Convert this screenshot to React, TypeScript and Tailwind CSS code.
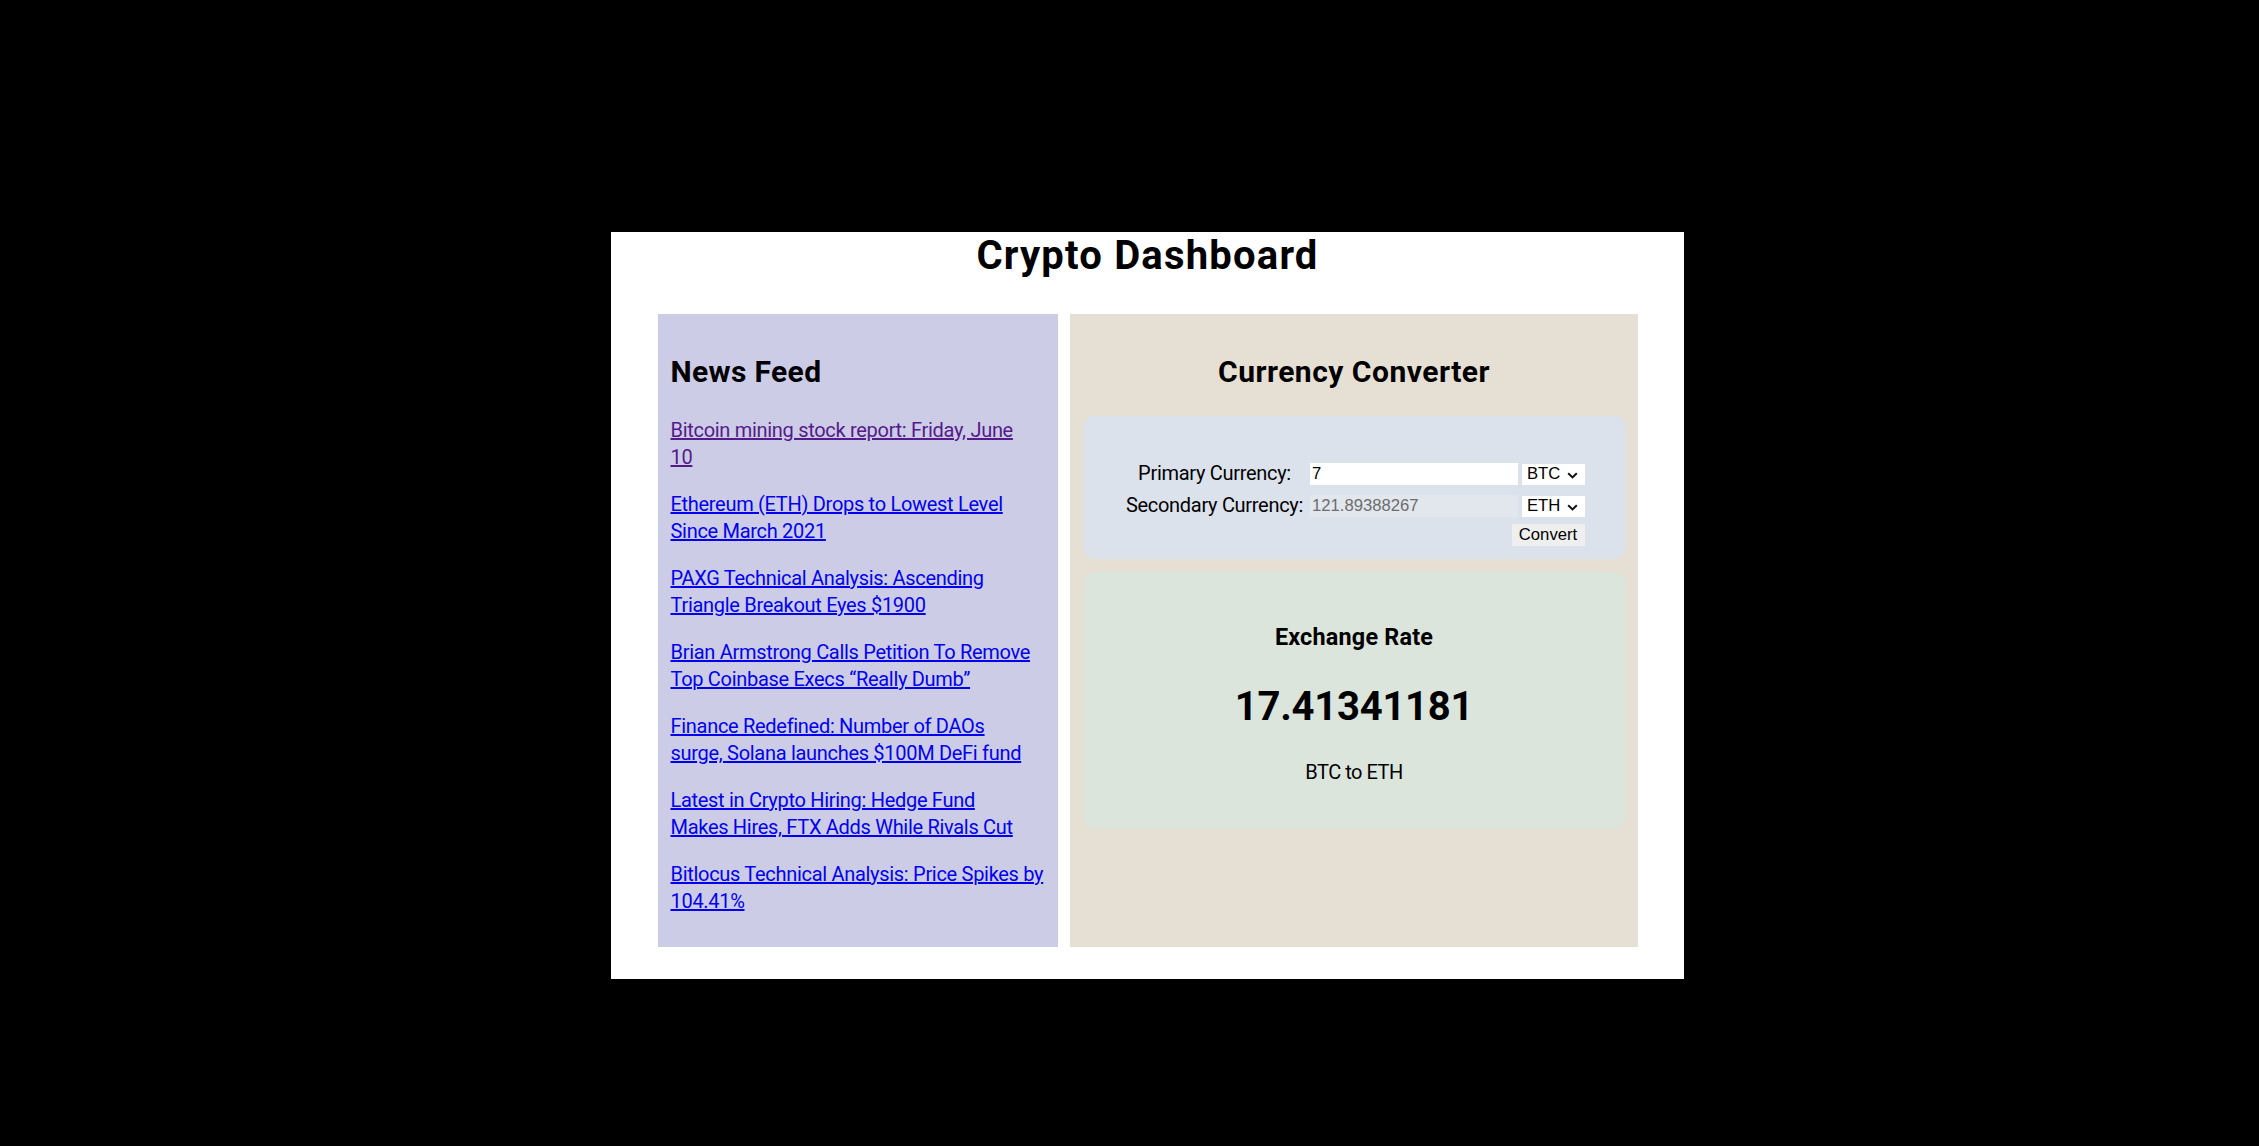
import React from "react";

const links: { lines: [string, string]; visited?: boolean }[] = [
  { lines: ["Bitcoin mining stock report: Friday, June", "10"], visited: true },
  { lines: ["Ethereum (ETH) Drops to Lowest Level", "Since March 2021"] },
  { lines: ["PAXG Technical Analysis: Ascending", "Triangle Breakout Eyes $1900"] },
  { lines: ["Brian Armstrong Calls Petition To Remove", "Top Coinbase Execs \u201CReally Dumb\u201D"] },
  { lines: ["Finance Redefined: Number of DAOs", "surge, Solana launches $100M DeFi fund"] },
  { lines: ["Latest in Crypto Hiring: Hedge Fund", "Makes Hires, FTX Adds While Rivals Cut"] },
  { lines: ["Bitlocus Technical Analysis: Price Spikes by", "104.41%"] },
];

function Chevron() {
  return (
    <svg
      width="11"
      height="7"
      viewBox="0 0 11 7"
      className="pointer-events-none absolute right-[7px] top-[7.5px]"
    >
      <path d="M1.2 1.3 L5.5 5.4 L9.8 1.3" fill="none" stroke="#111" strokeWidth="2" />
    </svg>
  );
}

function CurrencySelect({ value, options }: { value: string; options: string[] }) {
  return (
    <div className="relative ml-[4.5px] mt-[4.5px] h-[20.5px] w-[62.5px] bg-white">
      <select
        defaultValue={value}
        className="block h-[20.5px] w-[62.5px] appearance-none border-0 bg-white p-0 pl-[5px] text-[16.67px] leading-[20.5px] text-black outline-none [font-family:'Liberation_Sans',Arial,sans-serif]"
      >
        {options.map((o) => (
          <option key={o} value={o}>
            {o}
          </option>
        ))}
      </select>
      <Chevron />
    </div>
  );
}

export default function App() {
  const opts = ["BTC", "ETH", "USD", "XRP", "LTC", "ADA"];
  return (
    <div className="min-h-screen w-full bg-black pl-[611px] pt-[232px] text-black [font-family:Roboto,sans-serif]">
      <div className="w-[1073px] bg-white pb-[32px]">
        <h1 className="text-center text-[40px] font-bold leading-[48px] tracking-[1.2px]">
          Crypto Dashboard
        </h1>
        <div className="mt-[34px] flex h-[633px] gap-[12px] pl-[47px] pr-[46px]">
          {/* News feed */}
          <div className="w-[400px] shrink-0 bg-[#ccccE6] px-[12.5px] pt-[12px]">
            <h2 className="mt-[26px] text-[30px] font-bold leading-[40px] tracking-[0.35px]">
              News Feed
            </h2>
            <div className="mt-[25px] flex flex-col gap-[20px]">
              {links.map((l, i) => (
                <a
                  key={i}
                  href="#"
                  className={`block text-[20px] leading-[27px] tracking-[-0.3px] underline ${
                    l.visited ? "text-[#551a8b]" : "text-[#0000ee]"
                  }`}
                >
                  <span className="whitespace-nowrap">{l.lines[0]}</span>
                  <br />
                  <span className="whitespace-nowrap">{l.lines[1]}</span>
                </a>
              ))}
            </div>
          </div>

          {/* Currency converter */}
          <div className="flex-1 bg-[#e5dfd4] px-[12.5px] pt-[12px]">
            <h2 className="mt-[26px] text-center text-[30px] font-bold leading-[40px] tracking-[0.5px]">
              Currency Converter
            </h2>
            <div className="mt-[24px] h-[143px] rounded-[12px] bg-[#dce2ec] pt-[43.5px]">
              <div className="mx-auto w-[461px]">
                <div className="flex h-[32px] items-start">
                  <div className="w-[182px] whitespace-nowrap text-center text-[20px] leading-[27px] tracking-[-0.3px]">
                    Primary Currency:
                  </div>
                  <input
                    defaultValue="7"
                    className="ml-[4px] mt-[3.5px] h-[21.5px] w-[208px] border-0 bg-white p-0 pl-[2.5px] text-[16.67px] text-black outline-none [font-family:'Liberation_Sans',Arial,sans-serif]"
                  />
                  <CurrencySelect value="BTC" options={opts} />
                </div>
                <div className="flex h-[32px] items-start">
                  <div className="w-[182px] whitespace-nowrap text-center text-[20px] leading-[27px] tracking-[-0.3px]">
                    Secondary Currency:
                  </div>
                  <input
                    readOnly
                    defaultValue="121.89388267"
                    className="ml-[4px] mt-[3.5px] h-[21.5px] w-[208px] border-0 bg-[#e2e6ed] p-0 pl-[2.5px] text-[16.67px] text-[#6d6d6d] outline-none [font-family:'Liberation_Sans',Arial,sans-serif]"
                  />
                  <CurrencySelect value="ETH" options={opts} />
                </div>
                <div className="flex justify-end">
                  <button className="mt-[0.5px] h-[21.7px] w-[73px] border-0 bg-[#efefef] p-0 text-center text-[16.67px] leading-[21.7px] text-black [font-family:'Liberation_Sans',Arial,sans-serif]">
                    Convert
                  </button>
                </div>
              </div>
            </div>

            <div className="mt-[12.7px] h-[257px] rounded-[12px] bg-[#dce5dc] pt-[50px] text-center">
              <h3 className="text-[23.4px] font-bold leading-[31px] tracking-[0.2px]">
                Exchange Rate
              </h3>
              <div className="mt-[27.3px] text-[40px] font-bold leading-[53px] tracking-[-0.25px]">
                17.41341181
              </div>
              <p className="mt-[26px] text-[20px] leading-[27px] tracking-[-0.5px]">BTC to ETH</p>
            </div>
          </div>
        </div>
      </div>
    </div>
  );
}
